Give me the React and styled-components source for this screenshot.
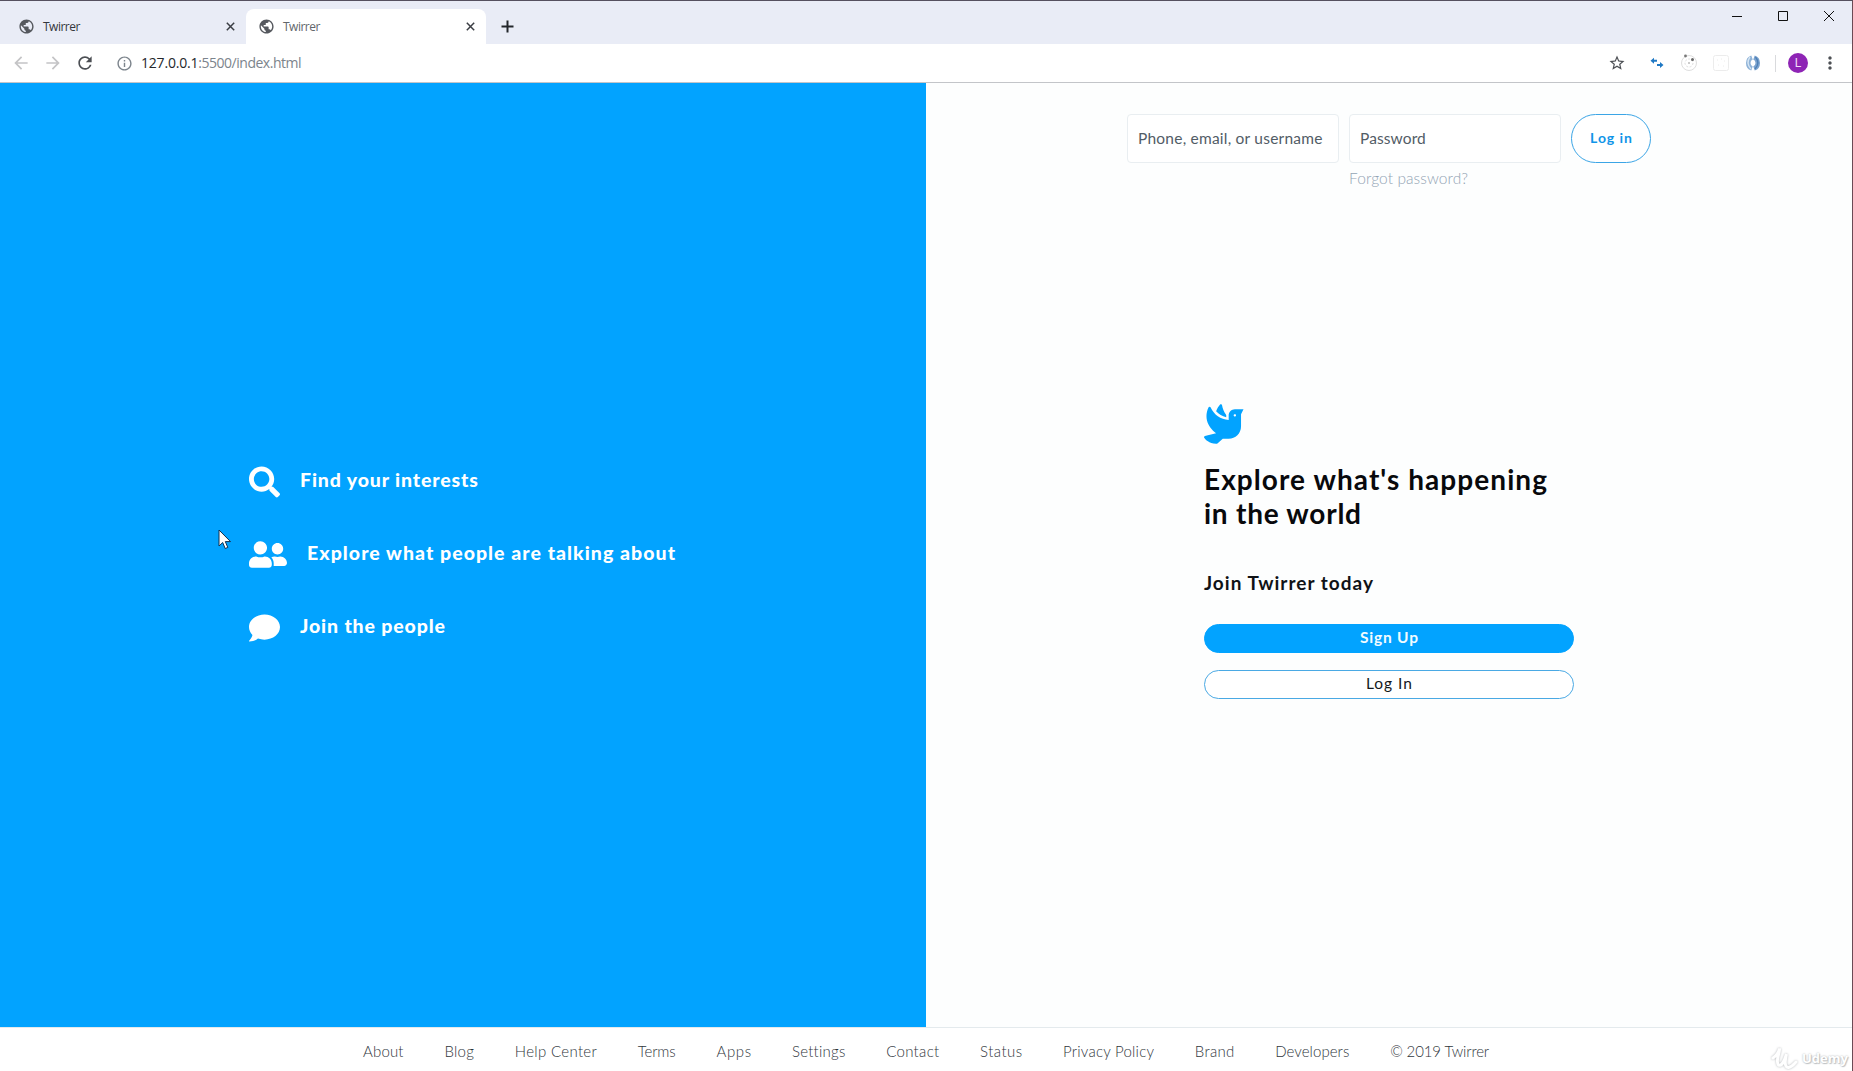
import React, { useLayoutEffect, useRef, useState } from "react";
import styled, { createGlobalStyle, css } from "styled-components";
import { FaSearch, FaUserFriends, FaComment, FaDove } from "react-icons/fa";
import { MdPublic, MdArrowBack, MdArrowForward, MdRefresh, MdInfoOutline, MdStarBorder, MdMoreVert } from "react-icons/md";

const BLUE = "#02a3ff";

const GlobalStyle = createGlobalStyle`
  * { box-sizing: border-box; }
  body { margin: 0; background: #fff; font-family: Lato, "Open Sans", sans-serif; overflow: hidden; }
  button, input { font-family: inherit; margin: 0; }
  svg { display: block; flex: none; }
`;

const Window = styled.div`
  display: flex;
  flex-direction: column;
  height: 1071px;
  border-top: 1px solid #55505f;
  border-right: 1px solid #6b4a55;
`;

const TabStrip = styled.div`
  display: flex;
  align-items: flex-end;
  height: 43px;
  flex: none;
  background: #e9ecf6;
`;

const Tab = styled.div`
  display: flex;
  align-items: center;
  height: 35px;
  width: ${(p) => (p.$active ? 240 : 246)}px;
  padding: 0 11px 0 ${(p) => (p.$active ? 12 : 18)}px;
  background: ${(p) => (p.$active ? "#fff" : "transparent")};
  border-radius: 8px 8px 0 0;
  color: ${(p) => (p.$active ? "#62666b" : "#33363c")};
  svg:first-child { color: #55585e; }
`;

const TabTitle = styled.span`
  flex: 1;
  margin-left: 8px;
  font: 12px/16px "Open Sans", sans-serif;
  letter-spacing: -0.5px;
`;

const NewTab = styled.div`
  display: flex;
  align-items: center;
  height: 35px;
  margin-left: 15px;
`;

const WindowButtons = styled.div`
  display: flex;
  align-self: flex-start;
  gap: 34px;
  margin: 9px 17px 0 auto;
`;

const Toolbar = styled.div`
  display: flex;
  align-items: center;
  height: 39px;
  flex: none;
  padding: 0 12px 0 11px;
  background: #fff;
  border-bottom: 1px solid #c3c5c9;
  color: #4c4f54;
`;

const NavIcons = styled.div`
  display: flex;
  align-items: center;
  gap: 12px;
  svg { color: #4c4f54; }
  svg:nth-child(-n + 2) { color: #c4c4c6; }
`;

const Address = styled.div`
  display: flex;
  align-items: center;
  gap: 8px;
  flex: 1;
  margin-left: 21px;
  font: 14px/20px "Open Sans", sans-serif;
  letter-spacing: -0.48px;
  color: #7c848c;
  b { font-weight: 400; color: #24272b; letter-spacing: -0.2px; }
`;

const Extensions = styled.div`
  display: flex;
  align-items: center;
  gap: 12px;
  margin-left: 21px;
`;

const Divider = styled.div`
  width: 1px;
  height: 17px;
  margin: 0 12px;
  background: #d9dadd;
`;

const Avatar = styled.div`
  width: 20px;
  height: 20px;
  margin-right: 12px;
  border-radius: 50%;
  background: #8e24b5;
  color: #f3dff9;
  font: 12px/20px Roboto, sans-serif;
  text-align: center;
`;

const Page = styled.main`
  display: grid;
  grid-template-columns: 926px 1fr;
  height: 944px;
  flex: none;
`;

const Features = styled.section`
  display: flex;
  flex-direction: column;
  gap: 40px;
  padding: 382px 0 0 249px;
  background: ${BLUE};
  color: #fff;
`;

const Feature = styled.div`
  display: flex;
  align-items: center;
  gap: 20px;
  height: 33px;
`;

const FeatureText = styled.div`
  font-size: 19.5px;
  font-weight: 900;
  line-height: 24px;
  padding-bottom: 3px;
`;

const FitSpan = styled.span`
  display: inline-block;
  white-space: nowrap;
`;

const Right = styled.section`
  display: flex;
  flex-direction: column;
  padding: 31px 0 0 201px;
  background: #fdfefe;
`;

const LoginForm = styled.form`
  display: grid;
  grid-template-columns: 212px 212px 80px;
  column-gap: 10px;
  row-gap: 4px;
`;

const Field = styled.input`
  width: 100%;
  height: 49px;
  padding: 0 10px 2px;
  border: 1px solid #e9eef1;
  border-radius: 4px;
  background: #fff;
  font-size: 15.5px;
  letter-spacing: ${(p) => p.$tracking}px;
  outline: none;
  &::placeholder { color: #525c66; opacity: 1; }
`;

const pill = css`
  display: flex;
  align-items: center;
  justify-content: center;
  border: 1px solid #3ba5e6;
  border-radius: 25px;
`;

const LoginButton = styled.button`
  ${pill}
  height: 49px;
  padding: 0 0 3px;
  background: #fff;
  color: #1095e8;
  font-size: 14px;
  font-weight: 700;
`;

const Forgot = styled.a`
  grid-column: 2;
  font-size: 15.5px;
  font-weight: 300;
  line-height: 22px;
  color: #93a4b4;
`;

const Hero = styled.div`
  display: flex;
  flex-direction: column;
  width: 370px;
  margin: 214px 0 0 77px;
`;

const Dove = styled(FaDove)`
  width: 39.5px;
  height: 42px;
  color: ${BLUE};
`;

const Title = styled.h1`
  margin: 18px 0 0;
  font-size: 28px;
  font-weight: 700;
  line-height: 33.5px;
  color: #08090c;
  span { display: block; width: max-content; }
`;

const Subtitle = styled.h2`
  margin: 40px 0 28px;
  font-size: 19px;
  font-weight: 700;
  line-height: 26px;
  color: #101216;
`;

const WideButton = styled.button`
  ${pill}
  width: 370px;
  height: 29px;
  margin-bottom: 17px;
  padding: 0 0 3px;
  background: ${(p) => (p.$filled ? BLUE : "#fff")};
  border-color: ${(p) => (p.$filled ? BLUE : "#4aa9e4")};
  color: ${(p) => (p.$filled ? "#f2fbff" : "#14171a")};
  font-size: 15.5px;
  font-weight: ${(p) => (p.$filled ? 700 : 400)};
`;

const Footer = styled.footer`
  display: flex;
  align-items: center;
  gap: 40.9px;
  flex: 1;
  padding: 2px 0 0 363px;
  border-top: 1px solid #e4eaed;
  background: #fff;
  color: #30363c;
  font-size: 15px;
  font-weight: 300;
`;

const Cursor = styled.svg`
  position: absolute;
  left: 218px;
  top: 529px;
`;

const Watermark = styled.div`
  position: absolute;
  left: 1771px;
  top: 1046px;
  display: flex;
  align-items: center;
  gap: 4px;
  font: 700 13px/24px "Open Sans", sans-serif;
  color: #fff;
  text-shadow: 0 0 2px #a9acaf, 1px 1px 1px #c6c8ca;
  svg { filter: drop-shadow(0 0 1px #b4b7ba); }
`;

/* Tracks a line out so that it fills the width set for it. */
function Fit({ width, children }) {
  const ref = useRef(null);
  const [tracking, setTracking] = useState(0);
  useLayoutEffect(() => {
    const node = ref.current;
    node.style.letterSpacing = "0px";
    const natural = node.getBoundingClientRect().width;
    const next = (width - natural) / (children.length - 1);
    node.style.letterSpacing = `${next}px`;
    setTracking(next);
  }, [width, children]);
  return (
    <FitSpan ref={ref} style={{ letterSpacing: tracking, marginRight: -tracking }}>
      {children}
    </FitSpan>
  );
}

const CloseIcon = () => (
  <svg width="9" height="9" viewBox="0 0 9 9" stroke="#3b3e44" strokeWidth="1.5">
    <path d="M.8.8l7.4 7.4M8.2.8L.8 8.2" />
  </svg>
);

const features = [
  { Icon: FaSearch, w: 31, h: 32, text: "Find your interests", fit: 178 },
  { Icon: FaUserFriends, w: 38, h: 31, text: "Explore what people are talking about", fit: 368 },
  { Icon: FaComment, w: 31, h: 32, text: "Join the people", fit: 145 },
];

const links = [
  ["About", 40.5], ["Blog", 29.5], ["Help Center", 82], ["Terms", 38], ["Apps", 34.5], ["Settings", 53],
  ["Contact", 53], ["Status", 42], ["Privacy Policy", 91], ["Brand", 39.5], ["Developers", 74], ["© 2019 Twirrer", 99],
];

export default function App() {
  return (
    <>
      <GlobalStyle />
      <Window>
        <TabStrip>
          <Tab>
            <MdPublic size={17} />
            <TabTitle>Twirrer</TabTitle>
            <CloseIcon />
          </Tab>
          <Tab $active>
            <MdPublic size={17} />
            <TabTitle>Twirrer</TabTitle>
            <CloseIcon />
          </Tab>
          <NewTab>
            <svg width="13" height="13" viewBox="0 0 13 13" stroke="#23262b" strokeWidth="2">
              <path d="M6.5.5v12M.5 6.5h12" />
            </svg>
          </NewTab>
          <WindowButtons>
            <svg width="12" height="12" stroke="#111" fill="none"><path d="M1 6.5h10" /></svg>
            <svg width="12" height="12" stroke="#111" fill="none"><path d="M1.5 1.5h9v9h-9z" /></svg>
            <svg width="12" height="12" stroke="#111" fill="none"><path d="M1 1l10 10M11 1L1 11" /></svg>
          </WindowButtons>
        </TabStrip>
        <Toolbar>
          <NavIcons>
            <MdArrowBack size={20} />
            <MdArrowForward size={20} />
            <MdRefresh size={20} />
          </NavIcons>
          <Address>
            <MdInfoOutline size={17} />
            <span><b>127.0.0.1</b>:5500/index.html</span>
          </Address>
          <MdStarBorder size={18} />
          <Extensions>
            <svg width="20" height="20" viewBox="0 0 20 20" fill="#1f78c4">
              <path d="M3.500 7.800l3.500-3v2h3v2H7v2zM16.500 12l-3.500-3v2h-3v2h3v2z" />
            </svg>
            <svg width="20" height="20" viewBox="0 0 20 20" fill="none" stroke="#dedede">
              <circle cx="10" cy="10" r="7.500" />
              <circle cx="10" cy="10" r="4" strokeDasharray="2 1.500" />
              <circle cx="10" cy="10" r="1" fill="#bbb" stroke="none" />
              <circle cx="6.500" cy="3" r="1.400" fill="#777" stroke="none" />
              <circle cx="13.500" cy="6.500" r="1.500" fill="#666" stroke="none" />
            </svg>
            <svg width="20" height="20" viewBox="0 0 20 20" fill="none" stroke="#ececec">
              <rect x="2.500" y="2.500" width="15" height="15" rx="2" />
              <path d="M6 7h1M10 6h1M13 8h1M7 12h1M12 13h1" />
            </svg>
            <svg width="20" height="20" viewBox="0 0 20 20" fill="none">
              <path d="M9 4.500A5.500 5.800 0 0 0 9 15.500" stroke="#8fb3d8" strokeWidth="4.500" />
              <path d="M11 15.500A5.500 5.800 0 0 0 11 4.500" stroke="#7ba3cf" strokeWidth="4.500" />
              <path d="M7 4Q2.500 10 8 16" stroke="#d5e5f3" strokeWidth="1.400" />
              <path d="M12.500 4Q17.500 10 12 16" stroke="#4d7fb5" strokeWidth="1.300" />
            </svg>
          </Extensions>
          <Divider />
          <Avatar>L</Avatar>
          <MdMoreVert size={20} />
        </Toolbar>
        <Page>
          <Features>
            {features.map(({ Icon, w, h, text, fit }) => (
              <Feature key={text}>
                <Icon style={{ width: w, height: h }} />
                <FeatureText><Fit width={fit}>{text}</Fit></FeatureText>
              </Feature>
            ))}
          </Features>
          <Right>
            <LoginForm>
              <Field placeholder="Phone, email, or username" $tracking={0.22} />
              <Field placeholder="Password" $tracking={0.1} />
              <LoginButton type="button"><Fit width={42}>Log in</Fit></LoginButton>
              <Forgot><Fit width={119}>Forgot password?</Fit></Forgot>
            </LoginForm>
            <Hero>
              <Dove />
              <Title>
                <Fit width={343}>Explore what's happening</Fit>
                <Fit width={157}>in the world</Fit>
              </Title>
              <Subtitle><Fit width={169}>Join Twirrer today</Fit></Subtitle>
              <WideButton $filled><Fit width={58}>Sign Up</Fit></WideButton>
              <WideButton><Fit width={46}>Log In</Fit></WideButton>
            </Hero>
          </Right>
        </Page>
        <Footer>
          {links.map(([label, width]) => (
            <Fit key={label} width={width}>{label}</Fit>
          ))}
        </Footer>
      </Window>
      <Cursor width="14" height="21" viewBox="0 0 14 21">
        <path d="M1 1v16l3.700-3.500 2.500 6 2.600-1.100-2.500-5.800H12.500z" fill="#fff" stroke="#15304f" />
      </Cursor>
      <Watermark>
        <svg width="27" height="24" viewBox="0 0 27 24" fill="none" stroke="#fff" strokeWidth="3" strokeLinecap="round">
          <path d="M2 12C6 9 8 5 8.500 2.500C9 7 4 15 7.500 19C11 21 14 13 15.500 8C14 13 13 22 17.500 21.500C21 21 23 18 25 16" />
        </svg>
        Udemy
      </Watermark>
    </>
  );
}
